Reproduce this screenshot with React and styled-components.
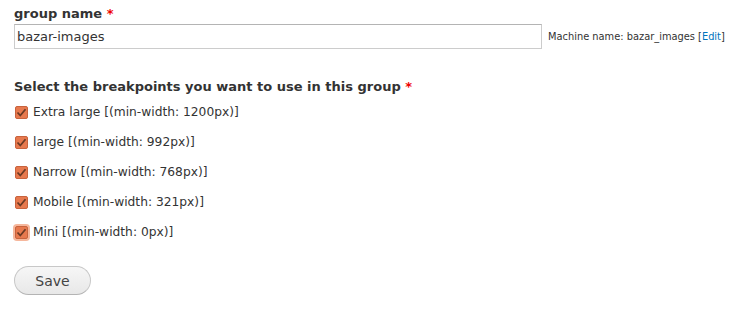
import React from "react";
import styled, { createGlobalStyle } from "styled-components";

const Global = createGlobalStyle`
  html, body { margin: 0; padding: 0; background: #fff; }
  body { font-family: "DejaVu Sans", Verdana, sans-serif; color: #333; }
`;

const Page = styled.form`
  padding: 6px 14px 0 14px;
  display: flex;
  flex-direction: column;
`;

const FieldLabel = styled.label`
  font-weight: bold;
  font-size: 13px;
  color: #333;
  line-height: 16px;
  display: block;
`;

const Req = styled.span`
  color: #e00;
`;

const InputRow = styled.div`
  display: flex;
  align-items: center;
  gap: 6px;
  margin-top: 2px;
`;

const TextInput = styled.input`
  flex-shrink: 0;
  width: 528px;
  height: 25px;
  box-sizing: border-box;
  border: 1px solid #ccc;
  border-top-color: #b4b4b4;
  padding: 2px 2px;
  font-family: "DejaVu Sans", Verdana, sans-serif;
  font-size: 13px;
  color: #333;
  outline: none;
`;

const Machine = styled.span`
  font-size: 9.85px;
  color: #333;
  white-space: nowrap;
`;

const EditLink = styled.a`
  color: #0074bd;
  text-decoration: none;
`;

const Fieldset = styled.div`
  margin-top: 30px;
  display: flex;
  flex-direction: column;
`;

const Options = styled.div`
  display: flex;
  flex-direction: column;
  gap: 14px;
  margin-top: 9px;
`;

const Option = styled.label`
  display: flex;
  align-items: center;
  gap: 5px;
  font-size: 12.25px;
  line-height: 16px;
  color: #333;
`;

const Box = styled.span`
  width: 13px;
  height: 13px;
  box-sizing: border-box;
  margin-left: 1px;
  border-radius: 2px;
  background: #e7794e;
  border: 1px solid #c8633d;
  display: inline-flex;
  align-items: center;
  justify-content: center;
  box-shadow: ${(p) => (p.$focus ? "0 0 0 2px #f6b79c" : "none")};
`;

const SaveButton = styled.button`
  margin-top: 26px;
  align-self: flex-start;
  width: 77px;
  height: 29px;
  border-radius: 15px;
  border: 1px solid #c8c8c8;
  border-bottom-color: #b4b4b4;
  background: linear-gradient(#f6f6f6, #e8e8e8);
  font-family: "DejaVu Sans", Verdana, sans-serif;
  font-size: 14px;
  color: #444;
`;

const Check = () => (
  <svg width="11" height="11" viewBox="0 0 11 11">
    <path d="M1.5 5.5 L4.3 8.5 L9.5 2.2" fill="none" stroke="#6b3a24" strokeWidth="1.8" />
  </svg>
);

const items = [
  "Extra large [(min-width: 1200px)]",
  "large [(min-width: 992px)]",
  "Narrow [(min-width: 768px)]",
  "Mobile [(min-width: 321px)]",
  "Mini [(min-width: 0px)]",
];

export default function App() {
  return (
    <>
      <Global />
      <Page>
        <FieldLabel>
          group name <Req>*</Req>
        </FieldLabel>
        <InputRow>
          <TextInput defaultValue="bazar-images" />
          <Machine>
            Machine name: bazar_images [<EditLink href="#">Edit</EditLink>]
          </Machine>
        </InputRow>
        <Fieldset>
          <FieldLabel>
            Select the breakpoints you want to use in this group <Req>*</Req>
          </FieldLabel>
          <Options>
            {items.map((t, i) => (
              <Option key={t}>
                <Box $focus={i === items.length - 1}>
                  <Check />
                </Box>
                {t}
              </Option>
            ))}
          </Options>
        </Fieldset>
        <SaveButton type="button">Save</SaveButton>
      </Page>
    </>
  );
}
